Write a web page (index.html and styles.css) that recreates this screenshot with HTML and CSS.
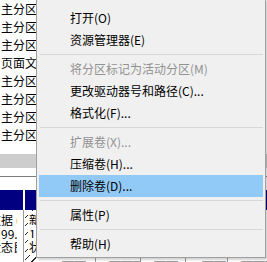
FILE: index.html
```html
<!DOCTYPE html>
<html lang="zh-CN">
  <head>
    <meta charset="UTF-8" />
    <title>磁盘管理</title>
    <link rel="stylesheet" href="styles.css">
  </head>
  <body>
    <div class="window">
      <div class="volume-list">
        <div class="row">主分区</div>
        <div class="row">主分区</div>
        <div class="row">主分区</div>
        <div class="row">页面文</div>
        <div class="row">主分区</div>
        <div class="row">主分区</div>
        <div class="row">主分区</div>
        <div class="row">主分区</div>
      </div>
      <div class="hscroll"></div>
      <div class="splitter"></div>
      <div class="disk-pane">
        <div class="volume vol-d">
          <div class="vol-head"></div>
          <div class="vol-body">
            <div class="line shift">数据 (D:)</div>
            <div class="line">99.00 GB</div>
            <div class="line shift">状态良好</div>
          </div>
        </div>
        <div class="volume vol-new selected">
          <div class="vol-head"></div>
          <div class="vol-body">
            <div class="line"><span>新加</span></div>
            <div class="line"><span>10</span></div>
            <div class="line"><span>状态</span></div>
          </div>
        </div>
        <div class="volume vol-a">
          <div class="vol-head"></div>
          <div class="vol-body"><div class="line">──</div></div>
        </div>
        <div class="volume vol-b">
          <div class="vol-head"></div>
          <div class="vol-body"><div class="line">───</div></div>
        </div>
        <div class="volume vol-c">
          <div class="vol-head"></div>
          <div class="vol-body"><div class="line">──</div></div>
        </div>
        <div class="volume vol-e">
          <div class="vol-head"></div>
          <div class="vol-body"><div class="line">──</div></div>
        </div>
        <div class="volume vol-f">
          <div class="vol-head"></div>
          <div class="vol-body"><div class="line">───</div></div>
        </div>
      </div>
    </div>

    <ul class="context-menu">
      <li class="item">打开(O)</li>
      <li class="item">资源管理器(E)</li>
      <li class="sep"></li>
      <li class="item disabled">将分区标记为活动分区(M)</li>
      <li class="item">更改驱动器号和路径(C)...</li>
      <li class="item">格式化(F)...</li>
      <li class="sep"></li>
      <li class="item disabled">扩展卷(X)...</li>
      <li class="item">压缩卷(H)...</li>
      <li class="item active">删除卷(D)...</li>
      <li class="sep"></li>
      <li class="item">属性(P)</li>
      <li class="sep"></li>
      <li class="item">帮助(H)</li>
    </ul>
  </body>
</html>
```

FILE: styles.css
```css
body {
    margin: 0;
    width: 267px;
    height: 262px;
    overflow: hidden;
    position: relative;
    background: #fff;
    font-family: "Noto Sans CJK SC", "Noto Sans", sans-serif;
    font-size: 12px;
    color: #000;
}

.window {
    width: 267px;
}

.row {
    width: 36px;
    height: 18px;
    line-height: 18px;
    padding-left: 1px;
    white-space: nowrap;
    overflow: hidden;
}

.hscroll {
    margin-top: 10px;
    height: 14px;
    background: #cdcdcd;
}

.splitter {
    margin-top: 8px;
    height: 1px;
    background: #7c7c7c;
}

.disk-pane {
    margin-top: 13px;
    display: flex;
    gap: 1px;
}

.volume {
    flex: none;
    overflow: hidden;
}

.vol-head {
    height: 20px;
    background: #000080;
}

.vol-body {
    box-sizing: border-box;
    padding-top: 3px;
    height: 52px;
    overflow: hidden;
    border-right: 1px solid #9a9a9a;
}

.line {
    line-height: 13.5px;
    white-space: nowrap;
    padding-left: 1px;
}

.line.shift {
    margin-left: -12px;
}

.vol-d { width: 24px; }
.vol-d .vol-head { margin-right: 1px; }
.vol-d .vol-body { width: 17px; border-right: none; box-shadow: 6px 0 0 #fff, 7px 0 0 #9a9a9a; overflow: hidden; }
.vol-d { overflow: visible; }

.vol-new { width: 11px; }
.vol-new .vol-body { border-right: none; }
.vol-a { width: 42px; margin-left: 17px; }
.vol-b { width: 40px; margin-left: 4px; }
.vol-c { width: 40px; margin-left: 4px; }
.vol-e { width: 34px; margin-left: 7px; }
.vol-f { width: 38px; margin-left: 4px; }

.vol-a .vol-body, .vol-b .vol-body, .vol-c .vol-body, .vol-e .vol-body, .vol-f .vol-body {
    padding-top: 45px;
}

.vol-a .line, .vol-b .line, .vol-c .line, .vol-e .line, .vol-f .line {
    color: #555;
    padding-left: 8px;
}

.selected .vol-body {
    background: repeating-linear-gradient(135deg, #fff 0 5px, #222 5px 6px);
}

.selected .line {
    padding-left: 3px;
}

.selected .line span {
    background: #fff;
    padding-left: 1px;
}

.context-menu {
    position: absolute;
    left: 36px;
    top: -1px;
    width: 224px;
    margin: 0;
    padding: 7px 2px 2px;
    list-style: none;
    background: #f0f0f0;
    border: 1px solid #a0a0a0;
    box-shadow: 2px 2px 2px rgba(0, 0, 0, 0.18);
}

.item {
    height: 22px;
    line-height: 22px;
    padding-left: 31px;
    white-space: nowrap;
}

.item.disabled {
    color: #929292;
}

.item.active {
    background: #91c9f7;
}

.sep {
    height: 7px;
    position: relative;
}

.sep::after {
    content: "";
    position: absolute;
    left: 1px;
    right: 0;
    top: 3px;
    border-top: 1px solid #d7d7d7;
}
```
